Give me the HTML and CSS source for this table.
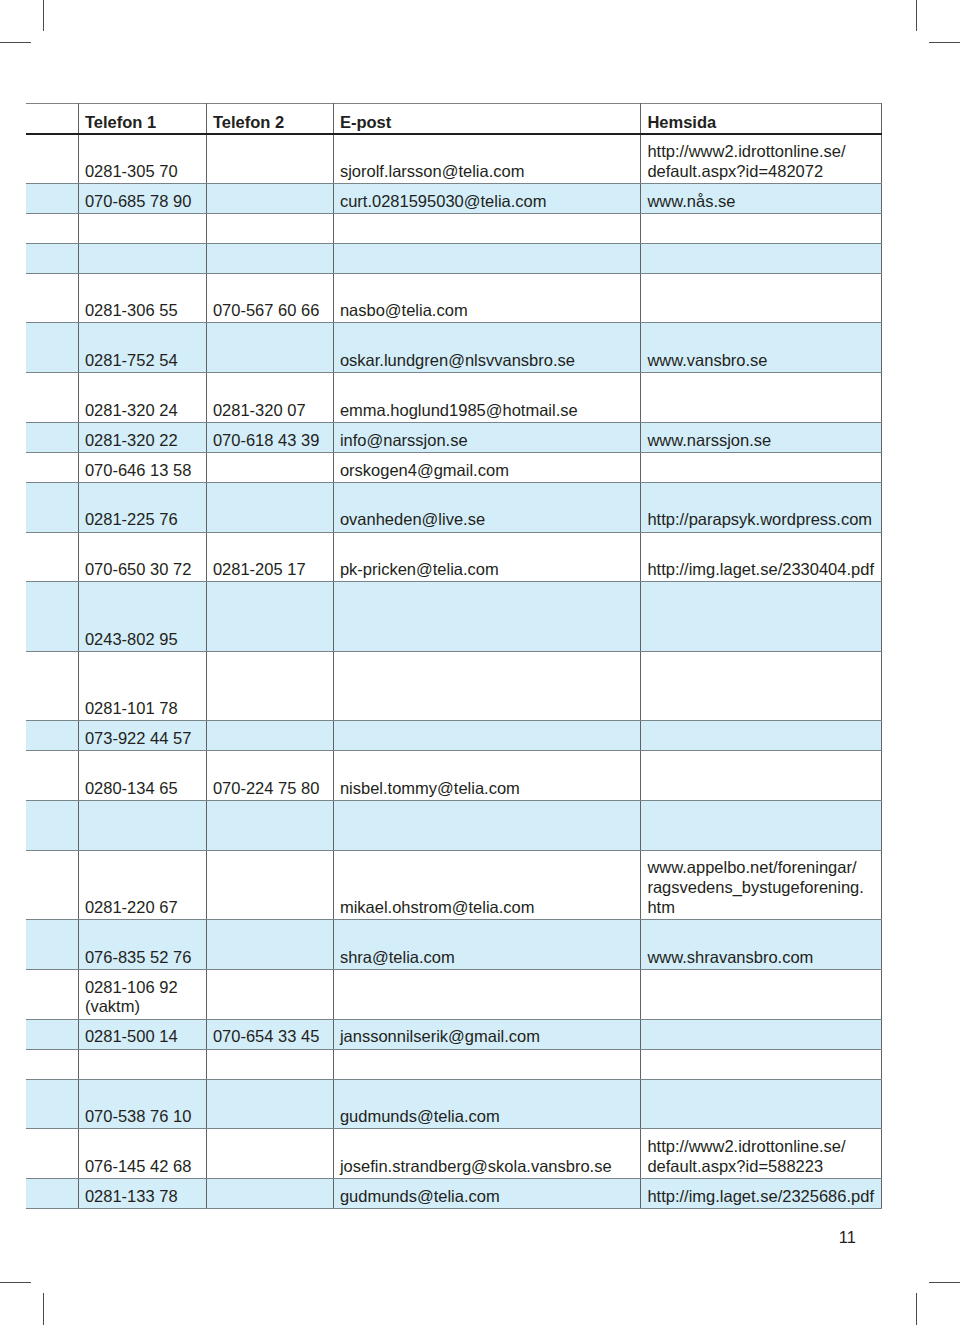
FILE: index.html
```html
<!DOCTYPE html>
<html lang="sv">
<head>
<meta charset="utf-8">
<title>Föreningar</title>
<link rel="stylesheet" href="styles.css">
</head>
<body>
<div class="page">
  <span class="mark v tl"></span><span class="mark h tl"></span>
  <span class="mark v tr"></span><span class="mark h tr"></span>
  <span class="mark v bl"></span><span class="mark h bl"></span>
  <span class="mark v br"></span><span class="mark h br"></span>

  <table class="list">
    <colgroup>
      <col class="c0"><col class="c1"><col class="c2"><col class="c3"><col class="c4">
    </colgroup>
    <thead>
      <tr><th></th><th>Telefon 1</th><th>Telefon 2</th><th>E-post</th><th>Hemsida</th></tr>
    </thead>
    <tbody>
      <tr class="l2"><td></td><td>0281-305 70</td><td></td><td>sjorolf.larsson@telia.com</td><td>http://www2.idrottonline.se/<br>default.aspx?id=482072</td></tr>
      <tr class="l1"><td></td><td>070-685 78 90</td><td></td><td>curt.0281595030@telia.com</td><td>www.nås.se</td></tr>
      <tr class="l1"><td></td><td></td><td></td><td></td><td></td></tr>
      <tr class="l1"><td></td><td></td><td></td><td></td><td></td></tr>
      <tr class="l2"><td></td><td>0281-306 55</td><td>070-567 60 66</td><td>nasbo@telia.com</td><td></td></tr>
      <tr class="l2"><td></td><td>0281-752 54</td><td></td><td>oskar.lundgren@nlsvvansbro.se</td><td>www.vansbro.se</td></tr>
      <tr class="l2"><td></td><td>0281-320 24</td><td>0281-320 07</td><td>emma.hoglund1985@hotmail.se</td><td></td></tr>
      <tr class="l1"><td></td><td>0281-320 22</td><td>070-618 43 39</td><td>info@narssjon.se</td><td>www.narssjon.se</td></tr>
      <tr class="l1"><td></td><td>070-646 13 58</td><td></td><td>orskogen4@gmail.com</td><td></td></tr>
      <tr class="l2"><td></td><td>0281-225 76</td><td></td><td>ovanheden@live.se</td><td>http://parapsyk.wordpress.com</td></tr>
      <tr class="l2"><td></td><td>070-650 30 72</td><td>0281-205 17</td><td>pk-pricken@telia.com</td><td>http://img.laget.se/2330404.pdf</td></tr>
      <tr class="l3"><td></td><td>0243-802 95</td><td></td><td></td><td></td></tr>
      <tr class="l3"><td></td><td>0281-101 78</td><td></td><td></td><td></td></tr>
      <tr class="l1"><td></td><td>073-922 44 57</td><td></td><td></td><td></td></tr>
      <tr class="l2"><td></td><td>0280-134 65</td><td>070-224 75 80</td><td>nisbel.tommy@telia.com</td><td></td></tr>
      <tr class="l2"><td></td><td></td><td></td><td></td><td></td></tr>
      <tr class="l3"><td></td><td>0281-220 67</td><td></td><td>mikael.ohstrom@telia.com</td><td>www.appelbo.net/foreningar/<br>ragsvedens_bystugeforening.<br>htm</td></tr>
      <tr class="l2"><td></td><td>076-835 52 76</td><td></td><td>shra@telia.com</td><td>www.shravansbro.com</td></tr>
      <tr class="l2"><td></td><td>0281-106 92<br>(vaktm)</td><td></td><td></td><td></td></tr>
      <tr class="l1"><td></td><td>0281-500 14</td><td>070-654 33 45</td><td>janssonnilserik@gmail.com</td><td></td></tr>
      <tr class="l1"><td></td><td></td><td></td><td></td><td></td></tr>
      <tr class="l2"><td></td><td>070-538 76 10</td><td></td><td>gudmunds@telia.com</td><td></td></tr>
      <tr class="l2"><td></td><td>076-145 42 68</td><td></td><td>josefin.strandberg@skola.vansbro.se</td><td>http://www2.idrottonline.se/<br>default.aspx?id=588223</td></tr>
      <tr class="l1"><td></td><td>0281-133 78</td><td></td><td>gudmunds@telia.com</td><td>http://img.laget.se/2325686.pdf</td></tr>
    </tbody>
  </table>

  <div class="pagenum">11</div>
</div>
</body>
</html>
```

FILE: styles.css
```css
html, body {
  margin: 0;
  padding: 0;
  background: #ffffff;
}

.page {
  position: relative;
  width: 960px;
  height: 1325px;
  overflow: hidden;
  font-family: "Liberation Sans", Arial, Helvetica, sans-serif;
  color: #231f20;
  padding-top: 103px;
  box-sizing: border-box;
}

/* crop marks */
.mark {
  position: absolute;
  background: #4a4a4a;
}
.mark.v { width: 1px; height: 31px; }
.mark.h { width: 31px; height: 1px; }
.mark.v.tl { left: 43px; top: 0; }
.mark.h.tl { left: 0; top: 42px; }
.mark.v.tr { left: 916px; top: 0; }
.mark.h.tr { left: 929px; top: 42px; }
.mark.v.bl { left: 43px; top: 1293px; height: 32px; }
.mark.h.bl { left: 0; top: 1282px; }
.mark.v.br { left: 916px; top: 1293px; height: 32px; }
.mark.h.br { left: 929px; top: 1282px; }

.list {
  margin-left: 26px;
  width: 855px;
  border-collapse: collapse;
  table-layout: fixed;
  font-size: 16.5px;
  line-height: 19.72px;
}

.c0 { width: 52px; }
.c1 { width: 128px; }
.c2 { width: 127px; }
.c3 { width: 307.5px; }
.c4 { width: 240.5px; }

.list th,
.list td {
  vertical-align: bottom;
  text-align: left;
  padding: 0 4px 1.5px 6.4px;
  border-left: 1px solid #5f6366;
  border-right: 1px solid #5f6366;
  white-space: nowrap;
}

.list th:first-child,
.list td:first-child {
  border-left: none;
}

.list thead tr {
  height: 30px;
}

.list th {
  font-weight: bold;
  border-top: 1px solid #7d8387;
  border-bottom: 2px solid #1e1e1e;
  padding-bottom: 0;
}

.list td {
  border-bottom: 1px solid #7b8488;
}

.list tbody tr:nth-child(even) td {
  background: #d3edf9;
}

.list tr.l1 { height: 30px; }
.list tr.l2 { height: 49.72px; }
.list tr.l3 { height: 69.44px; }

.pagenum {
  width: 856px;
  text-align: right;
  font-size: 16.5px;
  line-height: 20px;
  margin-top: 18px;
}
```
